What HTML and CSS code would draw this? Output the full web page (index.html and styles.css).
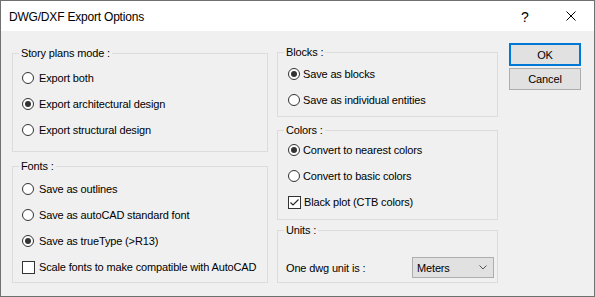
FILE: index.html
```html
<!DOCTYPE html>
<html lang="en">
    <head>
        <meta charset="UTF-8">
        <title>DWG/DXF Export Options</title>
        <link rel="stylesheet" href="styles.css">
    </head>
    <body>
        <div class="dialog">
            <div class="titlebar">
                <span class="title">DWG/DXF Export Options</span>
                <span class="cap-btn help">?</span>
                <span class="cap-btn close">
                    <svg width="10" height="10" viewBox="0 0 10 10"><path d="M0.5 0.5 L9.5 9.5 M9.5 0.5 L0.5 9.5" stroke="#000" stroke-width="1" fill="none"/></svg>
                </span>
            </div>
            <div class="content">
                <!-- left column -->
                <div class="col col-left">
                    <fieldset class="group story">
                        <legend>Story plans mode :</legend>
                        <div class="opt"><span class="radio"></span>Export both</div>
                        <div class="opt"><span class="radio on"></span>Export architectural design</div>
                        <div class="opt"><span class="radio"></span>Export structural design</div>
                    </fieldset>
                    <fieldset class="group fonts">
                        <legend>Fonts :</legend>
                        <div class="opt"><span class="radio"></span>Save as outlines</div>
                        <div class="opt"><span class="radio"></span>Save as autoCAD standard font</div>
                        <div class="opt"><span class="radio on"></span>Save as trueType (&gt;R13)</div>
                        <div class="opt"><span class="check"></span>Scale fonts to make compatible with AutoCAD</div>
                    </fieldset>
                </div>
                <!-- right column -->
                <div class="col col-right">
                    <fieldset class="group blocks">
                        <legend>Blocks :</legend>
                        <div class="opt"><span class="radio on"></span>Save as blocks</div>
                        <div class="opt"><span class="radio"></span>Save as individual entities</div>
                    </fieldset>
                    <fieldset class="group colors">
                        <legend>Colors :</legend>
                        <div class="opt"><span class="radio on"></span>Convert to nearest colors</div>
                        <div class="opt"><span class="radio"></span>Convert to basic colors</div>
                        <div class="opt"><span class="check on">
                            <svg width="11" height="11" viewBox="0 0 11 11"><path d="M1.5 5.5 L4 8 L9.5 2.5" stroke="#222" stroke-width="1.1" fill="none"/></svg>
                        </span>Black plot (CTB colors)</div>
                    </fieldset>
                    <fieldset class="group units">
                        <legend>Units :</legend>
                        <div class="unit-row">
                            <span>One dwg unit is :</span>
                            <div class="select">
                                <span>Meters</span>
                                <svg width="8" height="5" viewBox="0 0 8 5"><path d="M0.5 0.5 L4 4 L7.5 0.5" stroke="#555" stroke-width="1" fill="none"/></svg>
                            </div>
                        </div>
                    </fieldset>
                </div>
                <!-- buttons -->
                <div class="col buttons">
                    <div class="btn default">OK</div>
                    <div class="btn">Cancel</div>
                </div>
            </div>
        </div>
    </body>
</html>
```

FILE: styles.css
```css
*{
    margin: 0;
    padding: 0;
    box-sizing: border-box;
}
body{
    font-family: "Liberation Sans", Arial, sans-serif;
    font-size: 11px;
    letter-spacing: -0.15px;
    color: #000;
    background: #fff;
}
.dialog{
    width: 595px;
    height: 297px;
    border: 1px solid #707070;
    background: #f0f0f0;
    display: flex;
    flex-direction: column;
}
.titlebar{
    height: 30px;
    background: #fff;
    display: flex;
    align-items: center;
    padding-left: 8px;
}
.title{
    flex: 1;
    font-size: 12px;
    letter-spacing: -0.2px;
    padding-top: 2px;
}
.cap-btn{
    width: 46px;
    height: 30px;
    display: flex;
    align-items: center;
    justify-content: center;
}
.help{
    font-size: 14px;
    letter-spacing: 0;
    padding-top: 1px;
}
.close svg{
    display: block;
}
.content{
    flex: 1;
    display: flex;
    padding: 12px 0 0 11px;
}
.col{
    display: flex;
    flex-direction: column;
}
.col-left{
    width: 256px;
    padding-top: 3px;
}
.col-right{
    width: 221px;
    margin-left: 9px;
    padding-top: 2px;
}
.buttons{
    width: 72px;
    margin-left: 11px;
}
.group{
    border: 1px solid #dcdcdc;
    padding: 0 9px;
    min-width: 0;
}
.group legend{
    line-height: 14px;
    padding: 0 2px;
    margin-left: -3px;
}
.col-right .group{
    padding-left: 10px;
}
.col-right .group legend{
    margin-left: -4px;
}
.story{ height: 106px; padding-top: 5px; }
.fonts{ height: 124px; padding-top: 3px; margin-top: 7px; }
.blocks{ height: 72px; padding-top: 2px; }
.colors{ height: 97px; padding-top: 0; margin-top: 6px; }
.units{ height: 60px; padding-top: 20px; margin-top: 3px; }

.opt{
    height: 26px;
    display: flex;
    align-items: center;
    white-space: nowrap;
}
.radio{
    width: 12px;
    height: 12px;
    border: 1px solid #333;
    border-radius: 50%;
    background: #fff;
    margin-right: 5px;
    flex: none;
    display: flex;
    align-items: center;
    justify-content: center;
}
.radio.on::after{
    content: "";
    width: 6px;
    height: 6px;
    border-radius: 50%;
    background: #333;
}
.check{
    width: 13px;
    height: 13px;
    border: 1px solid #333;
    background: #fff;
    margin-right: 4px;
    flex: none;
}
.check svg{
    display: block;
}
.col-right .radio{
    margin-right: 3px;
}
.col-right .check{
    margin-right: 3px;
}
.unit-row{
    height: 21px;
    display: flex;
    align-items: center;
    justify-content: space-between;
    margin: 0 -6px 0 -2px;
}
.select{
    width: 82px;
    height: 21px;
    background: #e1e1e1;
    border: 1px solid #adadad;
    display: flex;
    align-items: center;
    justify-content: space-between;
    padding: 0 6px 0 4px;
}
.select svg{
    display: block;
}
.btn{
    height: 23px;
    background: #e1e1e1;
    border: 1px solid #adadad;
    display: flex;
    align-items: center;
    justify-content: center;
}
.btn.default{
    border: 2px solid #0078d7;
}
.btn + .btn{
    margin-top: 2px;
    height: 22px;
}
```
